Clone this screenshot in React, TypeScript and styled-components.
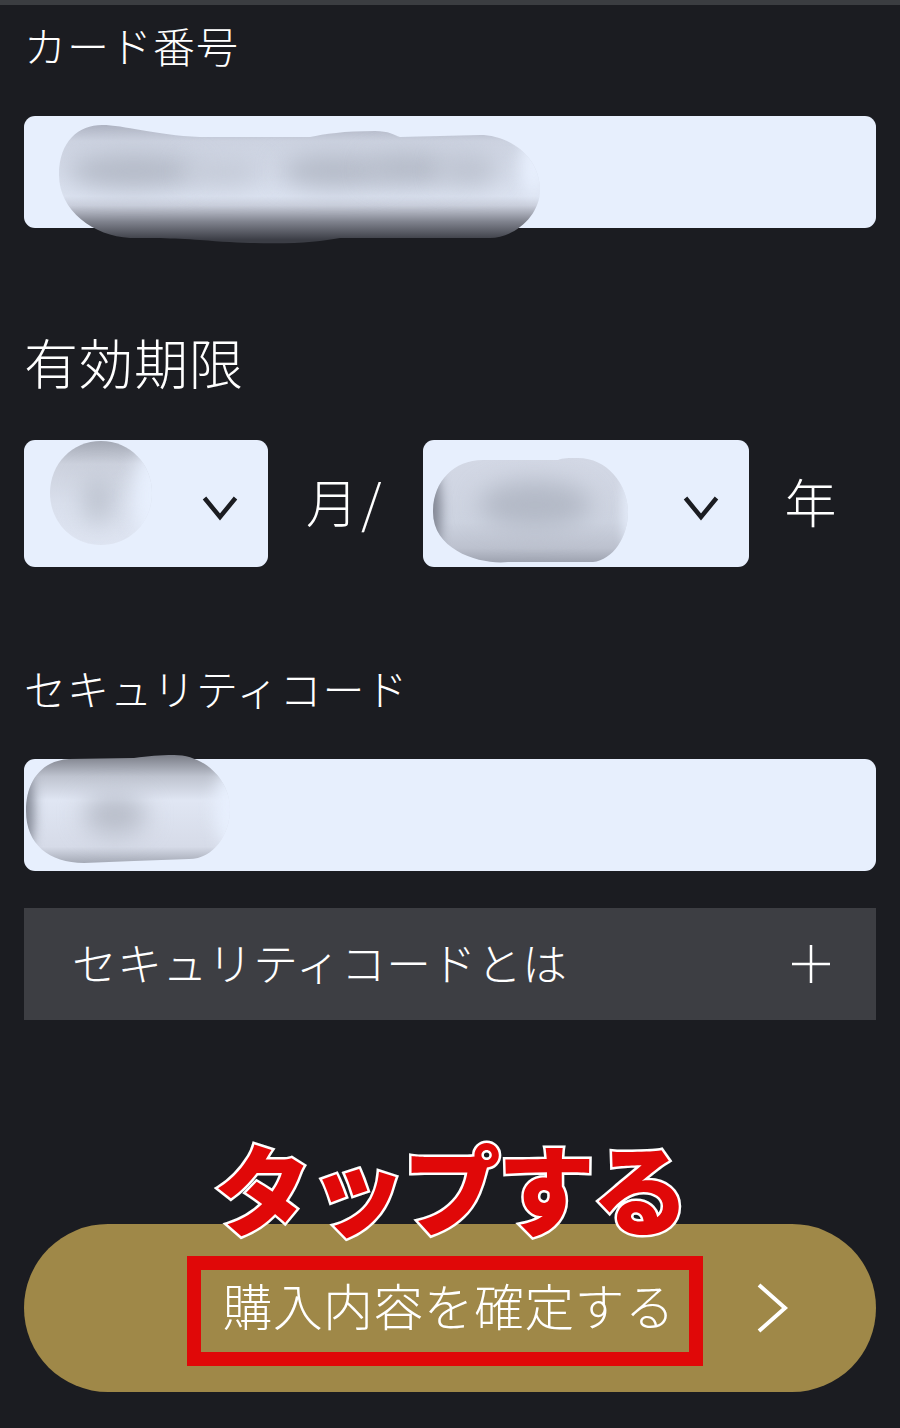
import styled, { createGlobalStyle } from "styled-components";
import { useId } from "react";

const GlobalStyle = createGlobalStyle`
  html, body {
    margin: 0;
    padding: 0;
    background: #1b1c21;
  }
`;

const Page = styled.div`
  width: 900px;
  height: 1428px;
  box-sizing: border-box;
  overflow: hidden;
  background: #1b1c21;
  border-top: 5px solid #3b3d41;
  padding: 0 24px;
  color: #fff;
  font-family: "Noto Sans CJK JP", "Noto Sans", sans-serif;
  font-weight: 300;
`;

const Label = styled.div<{ $size: number; $height: number; $mb: number; $ls: number }>`
  font-size: ${(p) => p.$size}px;
  letter-spacing: ${(p) => p.$ls}px;
  line-height: ${(p) => p.$height}px;
  height: ${(p) => p.$height}px;
  margin-bottom: ${(p) => p.$mb}px;
  white-space: nowrap;
`;

const Input = styled.div<{ $mb: number }>`
  position: relative;
  height: 112px;
  background: #e7effd;
  border-radius: 11px;
  margin-bottom: ${(p) => p.$mb}px;
`;

const DateRow = styled.div`
  display: flex;
  align-items: center;
  height: 127px;
  margin-bottom: 81px;
`;

const Select = styled.div<{ $width: number }>`
  position: relative;
  width: ${(p) => p.$width}px;
  height: 127px;
  flex: none;
  background: #e7effd;
  border-radius: 11px;
`;

const Caret = styled.svg`
  position: absolute;
  right: 30px;
  top: 55px;
  width: 36px;
  height: 26px;
`;

const Unit = styled.span<{ $ml: number; $mr?: number; $ls: number }>`
  margin-left: ${(p) => p.$ml}px;
  margin-right: ${(p) => p.$mr ?? 0}px;
  margin-top: -6px;
  font-size: 52px;
  letter-spacing: ${(p) => p.$ls}px;
  line-height: 60px;
  white-space: nowrap;
`;

const SmearSvg = styled.svg`
  position: absolute;
  left: 0;
  top: 0;
  width: 100%;
  height: 100%;
  overflow: visible;
  pointer-events: none;
`;

const SmearSpot = styled.ellipse<{ $blur: number }>`
  filter: blur(${(p) => p.$blur}px);
`;

const Accordion = styled.div`
  display: flex;
  align-items: center;
  justify-content: space-between;
  height: 112px;
  background: #3d3e43;
  padding: 0 46px 0 48px;
  font-size: 44.7px;
  letter-spacing: 0.6px;
  margin-bottom: 204px;
`;

const AccordionText = styled.span`
  white-space: nowrap;
  margin-top: -6px;
`;

const PlusIcon = styled.svg`
  width: 38px;
  height: 38px;
`;

const BuyButton = styled.div`
  position: relative;
  height: 168px;
  border-radius: 84px;
  background: #9f8848;
  display: flex;
  align-items: center;
`;

const RedFrame = styled.div`
  box-sizing: border-box;
  margin: 6px 0 0 163px;
  width: 516px;
  height: 110px;
  padding: 0 0 14px 8px;
  border: 14px solid #e00808;
  display: flex;
  align-items: center;
  justify-content: center;
  font-size: 49.6px;
  letter-spacing: 0.7px;
  white-space: nowrap;
`;

const Chevron = styled.svg`
  width: 34px;
  height: 52px;
  margin-left: 53px;
`;

const Callout = styled.div`
  position: absolute;
  left: 190px;
  top: -104px;
  font-size: 98px;
  line-height: 130px;
  font-weight: 900;
  letter-spacing: -3.6px;
  color: #e00808;
  -webkit-text-stroke: 5px #fff;
  paint-order: stroke fill;
  white-space: nowrap;
`;

type Spot = { cx: number; cy: number; rx: number; ry: number; fill: string; blur: number };
type Stop = [number, string];

const FIELD = "#e7effd";
const CORE = "#b3b9c6";

// blurred finger smear over a hidden value, coordinates are relative to the field
const Smear = ({ d, y1, y2, stops, spots }: { d: string; y1: number; y2: number; stops: Stop[]; spots: Spot[] }) => {
  const id = useId();
  return (
    <SmearSvg>
      <defs>
        <linearGradient id={`${id}g`} gradientUnits="userSpaceOnUse" x1="0" y1={y1} x2="0" y2={y2}>
          {stops.map(([o, c]) => (
            <stop key={o} offset={o} stopColor={c} />
          ))}
        </linearGradient>
        <clipPath id={`${id}c`}>
          <path d={d} />
        </clipPath>
      </defs>
      <path d={d} fill={`url(#${id}g)`} />
      <g clipPath={`url(#${id}c)`}>
        {spots.map((s, i) => (
          <SmearSpot key={i} cx={s.cx} cy={s.cy} rx={s.rx} ry={s.ry} fill={s.fill} $blur={s.blur} />
        ))}
      </g>
    </SmearSvg>
  );
};

const CaretDown = () => (
  <Caret viewBox="0 0 36 26">
    <path d="M2.5 3 L18 22 L33.5 3" fill="none" stroke="#1b1c21" strokeWidth="4.5" />
  </Caret>
);

export default function App() {
  return (
    <Page>
      <GlobalStyle />
      <Label $size={42} $ls={1} $height={80} $mb={31}>
        カード番号
      </Label>
      <Input $mb={88}>
        <Smear
          d="M35 59 C35 25 55 9 78 9 C100 9 130 19 176 21 L286 21 C300 18 320 15 351 15 C365 15 370 19 376 21 L456 19 C485 19 516 40 516 74 C516 100 490 122 466 122 L316 122 C290 127 250 130 176 124 C150 122 120 122 106 122 C70 120 35 95 35 59 Z"
          y1={9}
          y2={124}
          stops={[
            [0, "#aeb3c2"],
            [0.14, "#cdd3e1"],
            [0.62, "#dbe2f0"],
            [0.7, "#c9cedb"],
            [0.84, "#80838e"],
            [1, "#3b3d45"],
          ]}
          spots={[
            { cx: 110, cy: 55, rx: 66, ry: 17, fill: CORE, blur: 12 },
            { cx: 200, cy: 56, rx: 40, ry: 14, fill: "#c4cad7", blur: 12 },
            { cx: 310, cy: 55, rx: 54, ry: 16, fill: CORE, blur: 12 },
            { cx: 385, cy: 53, rx: 42, ry: 16, fill: CORE, blur: 12 },
            { cx: 445, cy: 54, rx: 30, ry: 16, fill: "#bcc2cf", blur: 12 },
            { cx: 510, cy: 50, rx: 14, ry: 30, fill: FIELD, blur: 8 },
          ]}
        />
      </Input>
      <Label $size={54} $ls={1} $height={92} $mb={32}>
        有効期限
      </Label>
      <DateRow>
        <Select $width={244}>
          <Smear
            d="M26 53 C26 24 48 1 77 1 C106 1 128 24 128 53 C128 82 106 105 77 105 C48 105 26 82 26 53 Z"
            y1={1}
            y2={105}
            stops={[
              [0, "#a4a9b5"],
              [0.22, "#ccd1dd"],
              [0.6, "#d9dfec"],
              [1, "#dfe5f2"],
            ]}
            spots={[
              { cx: 74, cy: 60, rx: 14, ry: 24, fill: "#bbc1cd", blur: 12 },
              { cx: 128, cy: 55, rx: 20, ry: 46, fill: FIELD, blur: 9 },
            ]}
          />
          <CaretDown />
        </Select>
        <Unit $ml={38} $mr={38} $ls={3}>
          月/
        </Unit>
        <Select $width={326}>
          <Smear
            d="M10 72 C10 42 30 20 60 20 L135 20 C140 18 145 18 155 18 C185 18 205 45 205 72 C205 97 190 120 170 122 L85 122 C60 125 10 112 10 72 Z"
            y1={18}
            y2={124}
            stops={[
              [0, "#d3d8e5"],
              [0.6, "#cdd3e0"],
              [0.85, "#bcc1ce"],
              [1, "#9a9fac"],
            ]}
            spots={[
              { cx: 112, cy: 65, rx: 56, ry: 24, fill: CORE, blur: 12 },
              { cx: 8, cy: 72, rx: 10, ry: 46, fill: "#808592", blur: 6 },
              { cx: 206, cy: 70, rx: 6, ry: 40, fill: FIELD, blur: 6 },
            ]}
          />
          <CaretDown />
        </Select>
        <Unit $ml={36} $ls={2}>
          年
        </Unit>
      </DateRow>
      <Label $size={42} $ls={1} $height={80} $mb={31}>
        セキュリティコード
      </Label>
      <Input $mb={37}>
        <Smear
          d="M2 52 C2 25 15 2 45 0 L110 -1 C125 -3 135 -4 150 -4 C180 -4 206 20 206 50 C206 75 190 100 165 100 L110 102 L60 104 C25 104 2 85 2 52 Z"
          y1={-4}
          y2={104}
          stops={[
            [0, "#7a7d87"],
            [0.2, "#bfc4d0"],
            [0.42, "#e0e6f3"],
            [0.85, "#d6dbe8"],
            [1, "#a5aab6"],
          ]}
          spots={[
            { cx: 91, cy: 56, rx: 32, ry: 20, fill: "#b8bdc9", blur: 12 },
            { cx: 0, cy: 52, rx: 10, ry: 44, fill: "#808592", blur: 6 },
            { cx: 206, cy: 50, rx: 16, ry: 40, fill: FIELD, blur: 8 },
          ]}
        />
      </Input>
      <Accordion>
        <AccordionText>セキュリティコードとは</AccordionText>
        <PlusIcon viewBox="0 0 38 38">
          <path d="M19 0 V38 M0 19 H38" stroke="#fff" strokeWidth="2.5" fill="none" />
        </PlusIcon>
      </Accordion>
      <BuyButton>
        <Callout>タップする</Callout>
        <RedFrame>購入内容を確定する</RedFrame>
        <Chevron viewBox="0 0 34 52">
          <path d="M3 3 L29 26 L3 49" fill="none" stroke="#fff" strokeWidth="4" />
        </Chevron>
      </BuyButton>
    </Page>
  );
}
